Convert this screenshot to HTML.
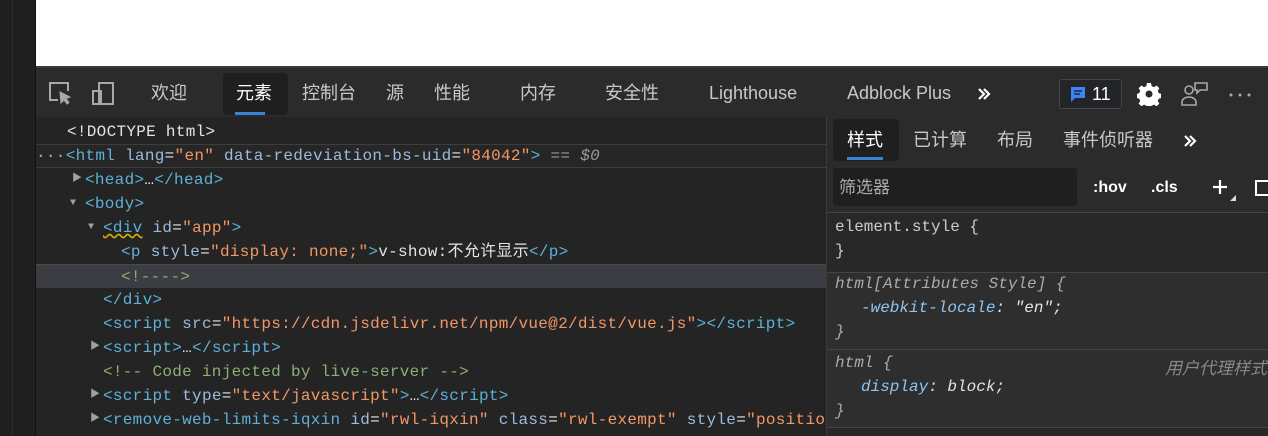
<!DOCTYPE html>
<html><head><meta charset="utf-8"><style>
*{margin:0;padding:0;box-sizing:border-box}
body{width:1268px;height:436px;overflow:hidden;background:#fff;position:relative;font-family:"Liberation Sans","Noto Sans CJK SC",sans-serif}
.abs{position:absolute}
.left{left:0;top:0;width:36px;height:436px;background:#1f1f1f;border-right:1px solid #111}
.left:before{content:"";position:absolute;left:12px;top:0;bottom:0;width:1px;background:#2c2c2c}
.tb{left:36px;top:66px;width:1232px;height:51px;background:#2b2b2b;border-top:2px solid #3a3a3a}
.tab{position:absolute;top:15px;font-size:18px;color:#c8c8c8;line-height:20px;white-space:nowrap}
.el{left:36px;top:117px;width:790px;height:319px;background:#242424}
.row{position:absolute;left:0;width:790px;height:24px;font-family:"Liberation Mono","Noto Sans CJK SC",monospace;font-size:16px;letter-spacing:0.29px;line-height:24px;color:#e3e3e3;white-space:pre}
.t{color:#5db0d7}.a{color:#9bbbdc}.v{color:#f29766}.c{color:#8fae74}
.tri{position:absolute;color:#a0a0a0;font-size:10px}
.rp{left:826px;top:117px;width:442px;height:319px;background:#282828;border-left:1px solid #3a3a3a}
.mono{font-family:"Liberation Mono",monospace;font-size:16px;position:absolute;white-space:pre;color:#e3e3e3}
</style></head><body>
<div class="abs left"></div>
<div class="abs tb">
 <svg class="abs" style="left:12px;top:13px" width="26" height="26" viewBox="0 0 26 26" fill="none" stroke="#a8a8a8" stroke-width="2"><path d="M10 19H2V2h18v8"/><path d="M12 11l10 5-4 1.5 3 4-2 1.5-3-4-3 3z" fill="#a8a8a8" stroke-width="1"/></svg>
 <svg class="abs" style="left:55px;top:13px" width="26" height="26" viewBox="0 0 26 26" fill="none" stroke="#a8a8a8" stroke-width="2"><rect x="8" y="2" width="14" height="21"/><rect x="2" y="10" width="8" height="13"/></svg>
 <div class="tab" style="left:115px">欢迎</div>
 <div class="abs" style="left:187px;top:5px;width:65px;height:42px;background:#1f1f1f;border-radius:4px"></div>
 <div class="abs" style="left:199px;top:44px;width:30px;height:3px;background:#3b82d6"></div>
 <div class="tab" style="left:200px;color:#fff">元素</div>
 <div class="tab" style="left:266px">控制台</div>
 <div class="tab" style="left:350px">源</div>
 <div class="tab" style="left:398px">性能</div>
 <div class="tab" style="left:484px">内存</div>
 <div class="tab" style="left:569px">安全性</div>
 <div class="tab" style="left:673px">Lighthouse</div>
 <div class="tab" style="left:811px">Adblock Plus</div>
 <svg class="abs" style="left:941px;top:19px" width="14" height="14" viewBox="0 0 14 14" fill="none" stroke="#fff" stroke-width="2.2"><path d="M2 2l5 5-5 5M7 2l5 5-5 5"/></svg>
 <div class="abs" style="left:1023px;top:11px;width:63px;height:30px;border:1px solid #454545;border-radius:3px;background:#222428"></div>
 <svg class="abs" style="left:1033px;top:18px" width="18" height="18" viewBox="0 0 18 18"><path d="M2 1h14v11H6l-4 4z" fill="#3b82f6"/><path d="M5 5h8M5 8h6" stroke="#1c2a45" stroke-width="1.5"/></svg>
 <div class="tab" style="left:1056px;top:16px;color:#fff">11</div>
 <svg class="abs" style="left:1101px;top:14px" width="24" height="24" viewBox="0 0 24 24"><path fill="#fff" d="M10 1h4l.6 3 2.4 1.2 2.6-1.7 2.8 2.8-1.7 2.6 1.2 2.4 3 .6v4l-3 .6-1.2 2.4 1.7 2.6-2.8 2.8-2.6-1.7-2.4 1.2-.6 3h-4l-.6-3-2.4-1.2-2.6 1.7-2.8-2.8 1.7-2.6-1.2-2.4-3-.6v-4l3-.6 1.2-2.4-1.7-2.6 2.8-2.8 2.6 1.7 2.4-1.2z"/><circle cx="12" cy="12" r="3.5" fill="#2b2b2b"/></svg>
 <svg class="abs" style="left:1145px;top:12px" width="30" height="28" viewBox="0 0 30 28" fill="none" stroke="#a8a8a8" stroke-width="1.6"><circle cx="8" cy="10" r="4"/><path d="M1 22a7 5 0 0 1 14 0v3H1z"/><path d="M14 3h12v7h-7l-3 3v-3h-2z"/></svg>
 <svg class="abs" style="left:1192px;top:24px" width="26" height="6" viewBox="0 0 26 6" fill="#a8a8a8"><circle cx="3" cy="3" r="1.5"/><circle cx="12" cy="3" r="1.5"/><circle cx="21" cy="3" r="1.5"/></svg>
</div>
<div class="abs el">
 <div class="row" style="top:3px"><span style="padding-left:31px">&lt;!DOCTYPE html&gt;</span></div>
 <div class="row" style="top:27px;background:#262626;border-top:1px solid #3d3d3d;border-bottom:1px solid #3d3d3d;line-height:22px"><span style="color:#aaa">···</span><span class="t">&lt;html</span> <span class="a">lang</span>=<span class="v">"en"</span> <span class="a">data-redeviation-bs-uid</span>=<span class="v">"84042"</span><span class="t">&gt;</span> <span style="color:#999;font-style:italic">== $0</span></div>
 <div class="row" style="top:51px"><span class="tri" style="left:36px">▶</span><span style="padding-left:49px" class="t">&lt;head&gt;</span>…<span class="t">&lt;/head&gt;</span></div>
 <div class="row" style="top:75px"><span class="tri" style="left:34px">▼</span><span style="padding-left:49px" class="t">&lt;body&gt;</span></div>
 <div class="row" style="top:99px"><span class="tri" style="left:52px">▼</span><span style="padding-left:67px" class="t"><span style="text-decoration:underline wavy #d8b400">&lt;div</span></span> <span class="a">id</span>=<span class="v">"app"</span><span class="t">&gt;</span></div>
 <div class="row" style="top:123px"><span style="padding-left:85px" class="t">&lt;p</span> <span class="a">style</span>=<span class="v">"display: none;"</span><span class="t">&gt;</span>v-show:不允许显示<span class="t">&lt;/p&gt;</span></div>
 <div class="row" style="top:147px;background:#3b3d42;border-top:1px solid #4a4a4a"><span style="padding-left:85px" class="c">&lt;!----&gt;</span></div>
 <div class="row" style="top:171px"><span style="padding-left:67px" class="t">&lt;/div&gt;</span></div>
 <div class="row" style="top:195px"><span style="padding-left:67px" class="t">&lt;script</span> <span class="a">src</span>=<span class="v">"https://cdn.jsdelivr.net/npm/vue@2/dist/vue.js"</span><span class="t">&gt;&lt;/script&gt;</span></div>
 <div class="row" style="top:219px"><span class="tri" style="left:54px">▶</span><span style="padding-left:67px" class="t">&lt;script&gt;</span>…<span class="t">&lt;/script&gt;</span></div>
 <div class="row" style="top:243px"><span style="padding-left:67px" class="c">&lt;!-- Code injected by live-server --&gt;</span></div>
 <div class="row" style="top:267px"><span class="tri" style="left:54px">▶</span><span style="padding-left:67px" class="t">&lt;script</span> <span class="a">type</span>=<span class="v">"text/javascript"</span><span class="t">&gt;</span>…<span class="t">&lt;/script&gt;</span></div>
 <div class="row" style="top:291px"><span class="tri" style="left:54px">▶</span><span style="padding-left:67px" class="t">&lt;remove-web-limits-iqxin</span> <span class="a">id</span>=<span class="v">"rwl-iqxin"</span> <span class="a">class</span>=<span class="v">"rwl-exempt"</span> <span class="a">style</span>=<span class="v">"positio</span></div>
</div>
<div class="abs rp">
 <div class="abs" style="left:0;top:0;width:442px;height:46px;background:#2b2b2b"></div>
 <div class="abs" style="left:6px;top:2px;width:66px;height:42px;background:#1f1f1f;border-radius:3px"></div>
 <div class="abs" style="left:20px;top:40px;width:36px;height:3px;background:#3b82d6"></div>
 <div class="tab" style="left:20px;top:13px;color:#fff">样式</div>
 <div class="tab" style="left:86px;top:13px">已计算</div>
 <div class="tab" style="left:170px;top:13px">布局</div>
 <div class="tab" style="left:236px;top:13px">事件侦听器</div>
 <svg class="abs" style="left:356px;top:17px" width="14" height="14" viewBox="0 0 14 14" fill="none" stroke="#fff" stroke-width="2.2"><path d="M2 2l5 5-5 5M7 2l5 5-5 5"/></svg>
 <div class="abs" style="left:0;top:46px;width:442px;height:50px;background:#2b2b2b;border-bottom:1px solid #444"></div>
 <div class="abs" style="left:6px;top:51px;width:244px;height:38px;background:#1f1f1f;border-radius:3px"></div>
 <div class="tab" style="left:12px;top:61px;color:#aaa;font-size:17px">筛选器</div>
 <div class="tab" style="left:266px;top:61px;color:#fff;font-weight:bold;font-size:16px">:hov</div>
 <div class="tab" style="left:324px;top:61px;color:#fff;font-weight:bold;font-size:16px">.cls</div>
 <svg class="abs" style="left:385px;top:62px" width="16" height="16" viewBox="0 0 16 16" stroke="#fff" stroke-width="2.2"><path d="M8 1v14M1 8h14"/></svg>
 <div class="abs" style="left:403px;top:78px;width:0;height:0;border-left:6px solid transparent;border-bottom:6px solid #ddd"></div>
 <div class="abs" style="left:428px;top:63px;width:16px;height:16px;border:2px solid #fff"></div>
 <div class="mono" style="left:8px;top:101px;color:#ccc">element.style {</div>
 <div class="mono" style="left:8px;top:125px;color:#ccc">}</div>
 <div class="abs" style="left:0;top:155px;width:442px;height:80px;background:#2e2e2e;border-top:1px solid #444"></div>
 <div class="mono" style="left:8px;top:158px;color:#aaa;font-style:italic">html[Attributes Style] {</div>
 <div class="mono" style="left:34px;top:182px;font-style:italic"><span style="color:#8ec5f0">-webkit-locale</span>: "en";</div>
 <div class="mono" style="left:8px;top:206px;color:#aaa;font-style:italic">}</div>
 <div class="abs" style="left:0;top:232px;width:442px;height:79px;background:#2e2e2e;border-top:1px solid #444;border-bottom:1px solid #444"></div>
 <div class="mono" style="left:8px;top:237px;color:#aaa;font-style:italic">html {</div>
 <div class="abs" style="left:338px;top:237px;color:#888;font-style:italic;font-size:17px;white-space:nowrap">用户代理样式表</div>
 <div class="mono" style="left:34px;top:261px;font-style:italic"><span style="color:#8ec5f0">display</span>: block;</div>
 <div class="mono" style="left:8px;top:285px;color:#aaa;font-style:italic">}</div>
</div>
</body></html>
